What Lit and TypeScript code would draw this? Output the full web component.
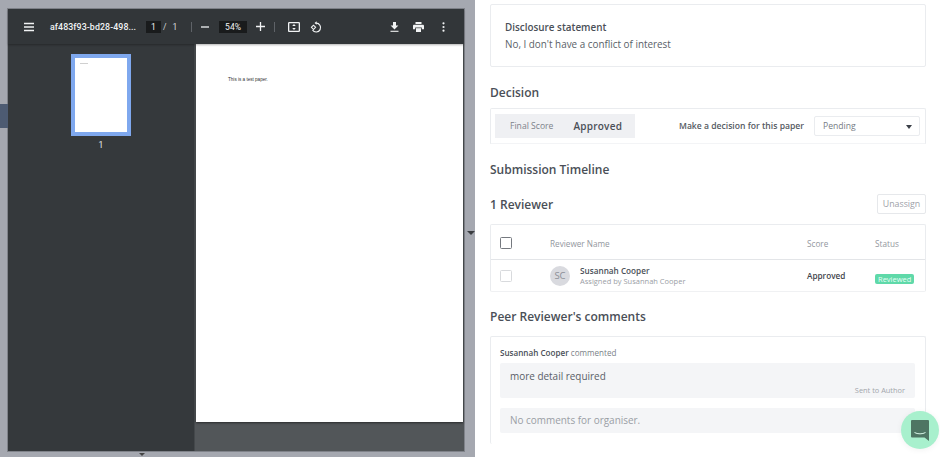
import { LitElement, html, css, svg } from "lit";
import { customElement } from "lit/decorators.js";

@customElement("app-root")
export class AppRoot extends LitElement {
  static styles = css`
    :host { display: block; width: 940px; height: 457px; overflow: hidden; background: #fff; font-family: "Open Sans", "Noto Sans", sans-serif; color: #4a4f57; position: relative; }
    * { box-sizing: border-box; }
    .page { display: flex; height: 457px; }
    .backdrop { width: 475px; height: 457px; background: #a5a8b0; padding: 9px 0 6px 8px; flex: none; position: relative; }
    .sliver { position: absolute; left: 0; top: 104px; width: 8px; height: 24px; background: #4d5b72; }
    .notch-b { position: absolute; left: 139px; top: 453px; border: 3px solid transparent; border-top: 3px solid #444; }
    .notch-r { position: absolute; left: 467px; top: 231px; border: 4px solid transparent; border-top: 4px solid #3a3d40; }
    .viewer { width: 456px; height: 442px; background: #323639; display: flex; flex-direction: column; font-family: Roboto, "Liberation Sans", sans-serif; box-shadow: 0 0 0 1px rgba(60,64,68,.35); }
    .toolbar { height: 35px; flex: none; display: flex; align-items: center; background: #323639; color: #f1f3f4; box-shadow: 0 1px 2px rgba(0,0,0,.3); position: relative; z-index: 1; font-size: 8.8px; }
    .tb-ic { display: flex; flex: none; }
    .menu { margin-left: 16px; margin-right: 16px; }
    .title { width: 96px; font-weight: 500; white-space: nowrap; letter-spacing: .1px; }
    .num { background: #191b1c; height: 12px; width: 15px; display: flex; align-items: center; justify-content: center; font-size: 8.5px; flex: none; }
    .num.zoom { width: 28px; margin: 0 9px 0 10px; }
    .of { width: 30px; padding-left: 2px; font-size: 8.5px; word-spacing: 4px; color: #d8dadc; flex: none; }
    .sep { width: 1px; height: 10px; background: #5f6368; flex: none; }
    .sep.a { margin-right: 9px; }
    .sep.b { margin: 0 13px 0 9px; }
    .g10 { margin-right: 10px; }
    .g14 { margin-right: 14px; }
    .g18 { margin-right: 18px; }
    .g19 { margin-right: 19px; }
    .spacer { flex: 1; }
    .body { flex: 1; display: flex; min-height: 0; }
    .side { width: 187px; background: #35393c; display: flex; flex-direction: column; align-items: center; padding-top: 10px; color: #e8eaed; font-size: 8.5px; border-right: 1px solid #44484b; }
    .thumb { width: 60px; height: 82px; background: #fff; border: 4px solid #7fa8ee; position: relative; margin-bottom: 4px; }
    .thumb i { position: absolute; left: 5px; top: 5px; width: 8px; height: 1px; background: #d0d0d0; }
    .doc { flex: 1; background: #525659; display: flex; flex-direction: column; padding: 0 1px; }
    .sheet { height: 378px; background: #fff; padding: 33px 0 0 32px; font-family: "Liberation Sans", sans-serif; font-size: 4.6px; color: #333; box-shadow: 0 1px 2px rgba(0,0,0,.5); }
    .main { flex: 1; padding: 4px 14px 0 15px; position: relative; min-width: 0; }
    .card { border: 1px solid #eaecef; border-radius: 2px; background: #fff; }
    .disc { height: 63px; padding: 14px 14px; font-size: 9.9px; line-height: 17px; color: #5a5f68; }
    .disc b { display: block; font-weight: 560; color: #4a4f57; }
    h3 { margin: 0; font-size: 12px; font-weight: 570; line-height: 17px; color: #4a4f57; }
    .h-dec { margin-top: 17px; }
    .dec { margin-top: 7px; height: 36px; border-radius: 2px 2px 0 0; padding: 5px 5px 0 4px; display: flex; align-items: flex-start; border-bottom: 1px solid #f3f4f6; }
    .score { width: 140px; height: 24px; background: #eff0f3; display: flex; align-items: center; padding-left: 15px; font-size: 8.6px; color: #7d828a; }
    .score b { font-weight: 570; font-size: 10px; color: #4a4f57; margin-left: 20px; letter-spacing: .25px; }
    .dec-l { margin-left: auto; font-size: 8.6px; font-weight: 570; color: #555a62; margin-right: 10px; line-height: 25px; }
    .select { width: 106px; height: 20px; margin-top: 2px; border: 1px solid #eaecef; border-radius: 2px; display: flex; align-items: center; justify-content: space-between; padding: 0 7px 0 8px; font-size: 8.6px; color: #767b83; }
    .caret { border: 3.5px solid transparent; border-top: 4px solid #3a3f47; margin-top: 4px; }
    .h-time { margin-top: 17px; }
    .rev-h { display: flex; justify-content: space-between; align-items: center; margin-top: 16px; height: 20px; }
    .btn { border: 1px solid #e6e8eb; border-radius: 2px; background: #fff; width: 49px; height: 20px; font-size: 8.8px; color: #9da1a8; display: flex; align-items: center; justify-content: center; }
    .table { margin-top: 10px; height: 68px; border-bottom: 1px solid #f0f1f3; }
    .tr { display: flex; align-items: center; }
    .tr.head { height: 35px; padding-top: 2px; border-bottom: 1px solid #e3e5e8; font-size: 8.2px; color: #93979e; }
    .tr.row { height: 31px; }
    .cb { width: 12px; height: 12px; margin-left: 9px; border: 1.5px solid #75797f; border-radius: 1.5px; flex: none; }
    .row .cb { border: 1px solid #d8dadd; }
    .c-name { margin-left: 38px; flex: 1; display: flex; align-items: center; }
    .c-score { width: 68px; }
    .c-status { width: 50px; }
    .av { width: 20px; height: 20px; border-radius: 50%; background: #d9dadf; color: #8b8f97; font-size: 9.5px; display: flex; align-items: center; justify-content: center; margin-right: 10px; }
    .nm { font-size: 8.2px; font-weight: 570; color: #4a4f57; line-height: 11px; }
    .by { font-size: 7.5px; color: #9a9ea5; line-height: 11px; }
    .row .c-score { font-size: 8.2px; font-weight: 570; color: #3f444c; }
    .pill { display: inline-block; background: #5fd9a9; color: #e8fff6; font-size: 7.5px; line-height: 10px; padding: 0 3px; border-radius: 2px; }
    .h-peer { margin-top: 16px; }
    .comments { margin-top: 11px; height: 108px; padding: 10px 10px 0 9px; border-bottom: none; }
    .who { font-size: 8.1px; line-height: 12px; color: #7a7f87; }
    .who b { font-weight: 570; color: #4a4f57; }
    .bubble { background: #f4f5f7; border-radius: 2px; margin-top: 4px; height: 35px; padding: 6px 10px; font-size: 9.95px; line-height: 14px; color: #5a5f68; position: relative; }
    .sent { position: absolute; right: 10px; bottom: 3px; font-size: 7.4px; line-height: 10px; color: #a3a6ac; }
    .none { background: #f4f5f7; border-radius: 2px; margin-top: 10px; height: 25px; padding: 0 10px; font-size: 9.95px; line-height: 25px; color: #9a9ea5; }
    .chat { position: absolute; left: 901px; top: 411px; width: 38px; height: 38px; border-radius: 50%; background: #a8f0cd; display: flex; align-items: center; justify-content: center; box-shadow: 0 1px 6px rgba(0,0,0,.06); }
  `;

  private ic(w: number, h: number, body: unknown, cls = "") {
    return html`<svg class="tb-ic ${cls}" width=${w} height=${h} viewBox="0 0 ${w} ${h}" fill="none">${body}</svg>`;
  }

  render() {
    return html`
      <div class="page">
        <div class="backdrop">
          <div class="sliver"></div>
          <div class="notch-r"></div>
          <div class="notch-b"></div>
          <div class="viewer">
            <div class="toolbar">
              ${this.ic(10, 10, svg`<path d="M0 1.5h10M0 5h10M0 8.5h10" stroke="#f1f3f4" stroke-width="1.3"/>`, "menu")}
              <span class="title">af483f93-bd28-498...</span>
              <span class="num">1</span>
              <span class="of">/ 1</span>
              <span class="sep a"></span>
              ${this.ic(8, 8, svg`<path d="M0 4h8" stroke="#f1f3f4" stroke-width="1.3"/>`)}
              <span class="num zoom">54%</span>
              ${this.ic(9, 9, svg`<path d="M0 4.5h9M4.5 0v9" stroke="#f1f3f4" stroke-width="1.3"/>`)}
              <span class="sep b"></span>
              ${this.ic(12, 10, svg`<rect x=".65" y=".65" width="10.7" height="8.7" rx=".6" stroke="#f1f3f4" stroke-width="1.3"/><path d="M4.2 3.9 6 2.1l1.8 1.8zM4.2 6.1 6 7.9l1.8-1.8z" fill="#f1f3f4"/>`, "g10")}
              ${this.ic(12, 12, svg`<path d="M6 2.2A4.4 4.4 0 1 1 2.5 9" stroke="#f1f3f4" stroke-width="1.2"/><path d="M6.6.2v3.6L4.5 2z" fill="#f1f3f4"/><rect x="2" y="4.8" width="3" height="3" transform="rotate(45 3.5 6.3)" stroke="#f1f3f4" stroke-width="1"/>`)}
              <span class="spacer"></span>
              ${this.ic(9, 10, svg`<path d="M3 0h3v3.5h2.4L4.5 7.4.6 3.5H3z" fill="#f1f3f4"/><path d="M.5 9.3h8" stroke="#f1f3f4" stroke-width="1.1"/>`, "g14")}
              ${this.ic(11, 10, svg`<path d="M2.5 0h6v2h-6zM1.2 2.8h8.6c.7 0 1.2.5 1.2 1.2v3.2H8.8V5.5H2.2v1.7H0V4c0-.7.5-1.2 1.2-1.2z" fill="#f1f3f4"/><path d="M3 6.2h5V10H3z" fill="#f1f3f4"/>`, "g18")}
              ${this.ic(3, 10, svg`<circle cx="1.5" cy="1.3" r="1.1" fill="#f1f3f4"/><circle cx="1.5" cy="5" r="1.1" fill="#f1f3f4"/><circle cx="1.5" cy="8.7" r="1.1" fill="#f1f3f4"/>`, "g19")}
            </div>
            <div class="body">
              <div class="side">
                <div class="thumb"><i></i></div>
                <div>1</div>
              </div>
              <div class="doc">
                <div class="sheet">This is a test paper.</div>
              </div>
            </div>
          </div>
        </div>
        <div class="main">
          <div class="card disc"><b>Disclosure statement</b>No, I don't have a conflict of interest</div>
          <h3 class="h-dec">Decision</h3>
          <div class="card dec">
            <div class="score">Final Score<b>Approved</b></div>
            <span class="dec-l">Make a decision for this paper</span>
            <div class="select">Pending<span class="caret"></span></div>
          </div>
          <h3 class="h-time">Submission Timeline</h3>
          <div class="rev-h"><h3>1 Reviewer</h3><div class="btn">Unassign</div></div>
          <div class="card table">
            <div class="tr head">
              <span class="cb"></span>
              <span class="c-name">Reviewer Name</span>
              <span class="c-score">Score</span>
              <span class="c-status">Status</span>
            </div>
            <div class="tr row">
              <span class="cb"></span>
              <div class="c-name">
                <div class="av">SC</div>
                <div><div class="nm">Susannah Cooper</div><div class="by">Assigned by Susannah Cooper</div></div>
              </div>
              <span class="c-score">Approved</span>
              <span class="c-status"><span class="pill">Reviewed</span></span>
            </div>
          </div>
          <h3 class="h-peer">Peer Reviewer's comments</h3>
          <div class="card comments">
            <div class="who"><b>Susannah Cooper</b> commented</div>
            <div class="bubble">more detail required<span class="sent">Sent to Author</span></div>
            <div class="none">No comments for organiser.</div>
          </div>
        </div>
      </div>
      <div class="chat">
        <svg width="18" height="21" viewBox="0 0 18 21"><path d="M1 0h16a1 1 0 0 1 1 1v20l-4.5-3.4H1a1 1 0 0 1-1-1V1a1 1 0 0 1 1-1z" fill="#4e7563"/><path d="M3.5 12.5c3 1.8 8 1.8 11 0" stroke="#d8f7e8" stroke-width="1" fill="none"/></svg>
      </div>
    `;
  }
}
